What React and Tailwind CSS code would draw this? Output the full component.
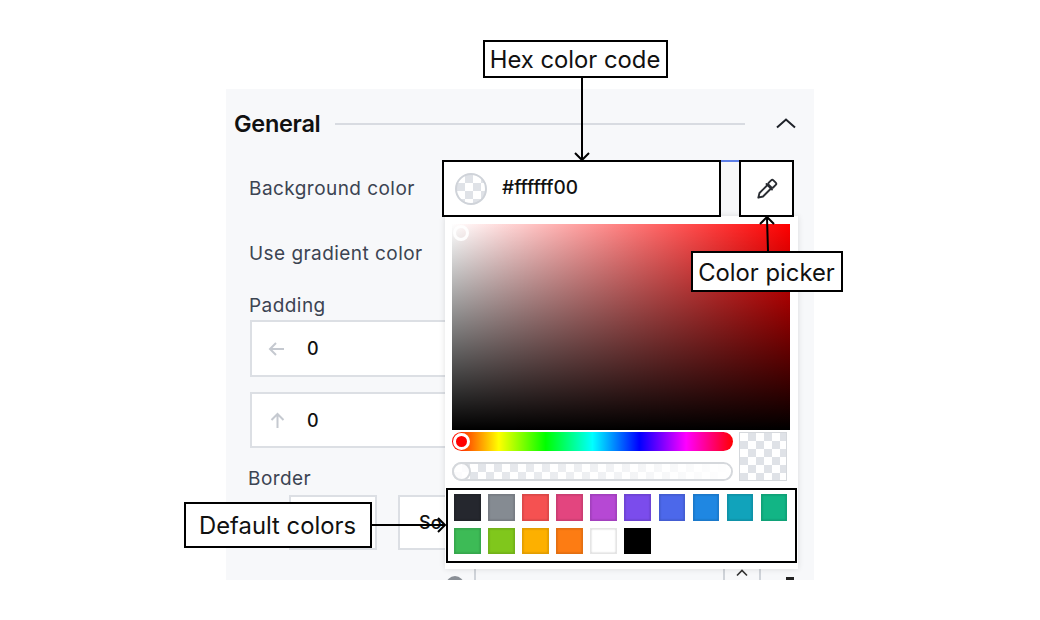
import React from "react";

const checker = {
  backgroundImage:
    "linear-gradient(45deg,#dfe2e7 25%,transparent 25%,transparent 75%,#dfe2e7 75%),linear-gradient(45deg,#dfe2e7 25%,transparent 25%,transparent 75%,#dfe2e7 75%)",
  backgroundSize: "16px 16px",
  backgroundPosition: "0 0,8px 8px",
};

const swatches = ["#25272e", "#858b92", "#f55151", "#e3457f", "#b648d4", "#7b4cec", "#4c68ea", "#1f87e2", "#11a3bb", "#12b585", "#3dbb56", "#80c71c", "#fdb000", "#fd7c13", "#ffffff", "#000000"];

function Swatch({ c }) {
  return (
    <div
      className="w-[26.5px] h-[26.5px] border border-black/10 shadow-[inset_0_0_2px_rgba(0,0,0,0.25)]"
      style={{ backgroundColor: c }}
    />
  );
}

function Note({ className, children }) {
  return (
    <div
      className={`absolute z-30 bg-white border-2 border-black flex items-center justify-center pt-[2px] pr-[1px] text-[23.8px] leading-none text-[#111] ${className}`}
    >
      {children}
    </div>
  );
}

function Label({ className = "", children }) {
  return <div className={`text-[19px] leading-[26px] tracking-[0.45px] ${className}`}>{children}</div>;
}

function NumberBox({ className, children }) {
  return (
    <div className={`ml-[24px] w-[300px] bg-white border-2 border-[#dcdfe4] flex items-center text-[18px] font-medium text-[#111] ${className}`}>
      {children}
      <span className="ml-[21px]">0</span>
    </div>
  );
}

export default function App() {
  return (
    <div className="relative w-[1040px] h-[620px] bg-white overflow-hidden font-['Inter',sans-serif]">
      <div className="pl-[226px] pt-[89px]">
        <div className="relative w-[588px] h-[491px] bg-[#f7f8fa] text-[#3c4452]">
          {/* Section header */}
          <div className="flex items-center h-[70px] pl-2">
            <span className="w-[89px] text-[23.5px] font-semibold tracking-[-0.3px] text-[#111]">General</span>
            <div className="ml-[12px] w-[410px] h-[2px] bg-[#d8dbe1]" />
            <svg className="ml-[30px] -mt-[3px]" width="22" height="12" viewBox="0 0 22 12" fill="none" stroke="#1e2229" strokeWidth="2">
              <path d="M2 10.5 11 2.5l9 8" />
            </svg>
          </div>

          {/* Background color row */}
          <div className="relative z-20 flex items-center mt-px">
            <Label className="w-[216px] pl-[23px]">Background color</Label>
            <div className="flex w-[352px] h-[57px] border-t-2 border-[#5d7fe8]">
              <div className="w-[279px] h-[57px] -mt-[2px] bg-white border-2 border-black flex items-center">
                <div className="ml-[11px] w-[32px] h-[32px] rounded-full bg-white border-2 border-[#cfd3d9]" style={checker} />
                <span className="ml-[15px] text-[19px] font-medium text-[#111]">#ffffff00</span>
              </div>
              <div className="ml-[18px] w-[55px] h-[57px] -mt-[2px] bg-white border-2 border-black flex items-center justify-center">
                <svg width="22" height="22" viewBox="0 0 22 22" fill="none" stroke="#2a2d33" strokeWidth="1.9" strokeLinejoin="round" strokeLinecap="round">
                  <path d="M11.5 7 3.5 15l-1.2 4.7L7 18.5l8-8" />
                  <path d="M10.5 6 16 11.5" />
                  <rect x="13" y="2.5" width="6.5" height="6.5" rx="1.6" transform="rotate(45 16.2 5.8)" />
                </svg>
              </div>
            </div>
          </div>

          <Label className="pl-[23px] mt-[24px]">Use gradient color</Label>
          <Label className="pl-[23px] mt-[26px]">Padding</Label>
          <NumberBox className="mt-[1px] h-[57px]">
            <svg className="ml-[15px]" width="19" height="16" viewBox="0 0 19 16" fill="none" stroke="#c5c9d0" strokeWidth="2">
              <path d="M17 8H3M9 2 3 8l6 6" />
            </svg>
          </NumberBox>
          <NumberBox className="mt-[15px] h-[56px]">
            <svg className="ml-[17px]" width="17" height="17" viewBox="0 0 17 17" fill="none" stroke="#c5c9d0" strokeWidth="2">
              <path d="M8.5 16V2M2.5 8l6-6 6 6" />
            </svg>
          </NumberBox>
          <Label className="pl-[22px] mt-[18px]">Border</Label>
          <div className="flex mt-[3px] pl-[63px] gap-[21px]">
            <div className="w-[88px] h-[55px] bg-white border-2 border-[#dcdfe4]" />
            <div className="w-[100px] h-[55px] bg-white border-2 border-[#dcdfe4] flex items-center pl-[19px] text-[18px] font-medium text-[#111]">So</div>
          </div>

          {/* Row peeking out beneath the popup */}
          <div className="flex items-start h-[11px] mt-[19px] pl-[220px] overflow-hidden">
            <div className="mt-[7px] w-[18px] h-[18px] shrink-0 rounded-full bg-[#8a8f96]" />
            <div className="ml-[10px] w-[2px] h-full bg-[#cfd3d9]" />
            <div className="ml-[247px] w-[38px] h-full border-x-2 border-[#cfd3d9] flex justify-center">
              <svg width="12" height="8" viewBox="0 0 12 8" fill="none" stroke="#333" strokeWidth="1.6">
                <path d="M1 6.5 6 1.5l5 5" />
              </svg>
            </div>
            <div className="ml-[25px] mt-[8px] w-[8px] h-[3px] bg-[#222]" />
          </div>

          {/* Colour picker popup */}
          <div className="absolute z-10 left-[219px] top-[127px] w-[353px] h-[353px] bg-white shadow-[0_0_6px_rgba(0,0,0,0.12)] px-[7px] pt-[8px]">
            <div className="relative w-[338px] h-[206px] bg-[linear-gradient(to_top,#000,transparent),linear-gradient(to_right,#fff,#f00)]">
              <div className="absolute left-[1px] top-[1px] w-4 h-4 rounded-full border-[3px] border-white/90" />
            </div>
            <div className="flex mt-[2px] gap-[6px]">
              <div className="w-[281px] flex flex-col gap-[11px]">
                <div className="relative h-[19px] rounded-full bg-[linear-gradient(to_right,#f00,#ff0,#0f0,#0ff,#00f,#f0f,#f00)]">
                  <div className="absolute left-[1px] top-[1px] w-[17px] h-[17px] rounded-full bg-[#f00] border-[3px] border-white" />
                </div>
                <div className="relative h-[19px] rounded-full border-2 border-[#d5d8dc] bg-white" style={checker}>
                  <div className="absolute inset-0 rounded-full bg-[linear-gradient(to_right,transparent,#fff)]" />
                  <div className="absolute -left-[2px] -top-[2px] w-[19px] h-[19px] rounded-full bg-white/90 border-2 border-[#d5d8dc]" />
                </div>
              </div>
              <div className="w-[48px] h-[49px] bg-white border border-[#d5d8dc]" style={checker} />
            </div>
            <div className="mt-[7px] -ml-[6px] w-[351px] h-[75px] bg-white border-2 border-black pl-[6px] pt-[4px] flex flex-wrap content-start gap-x-[7.6px] gap-y-[7px]">
              {swatches.map((c) => <Swatch key={c} c={c} />)}
            </div>
          </div>
        </div>
      </div>

      {/* Annotations drawn over the UI */}
      <Note className="left-[483px] top-[40px] w-[185px] h-[38px]">Hex color code</Note>
      <Note className="left-[691px] top-[251px] w-[152px] h-[41px]">Color picker</Note>
      <Note className="left-[184px] top-[502px] w-[188px] h-[46px]">Default colors</Note>
      <svg className="absolute z-20 left-0 top-0" width="1040" height="620" fill="none" stroke="#000" strokeWidth="2">
        <path d="M582 78V159M575 153l7 7 7-7" />
        <path d="M768 251 767 218M760 224l7-7 7 7" />
        <path d="M372 525H445M438 518l7 7-7 7" />
      </svg>
    </div>
  );
}
